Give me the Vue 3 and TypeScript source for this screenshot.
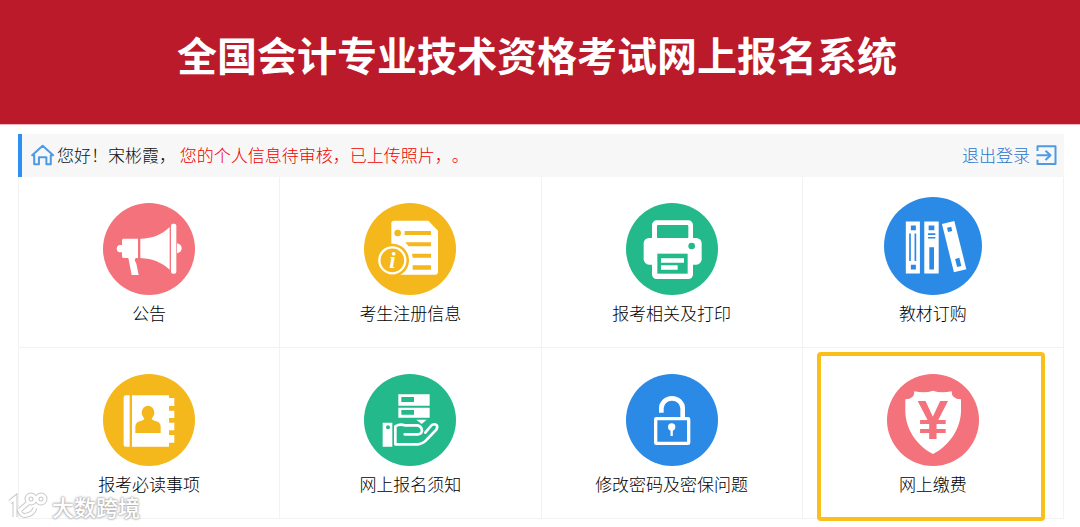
<script setup lang="ts">
type IconName = 'megaphone' | 'profile' | 'printer' | 'books' | 'notebook' | 'service' | 'lock' | 'payment'

interface Entry {
  icon: IconName
  label: string
  color: string
  viewBox: string
  cx: number
  cy: number
  r: number
  large?: boolean
  highlighted?: boolean
}

const pink = '#f3727b'
const yellow = '#f5b81c'
const green = '#24b98b'
const blue = '#2a8ae6'

const entries: Entry[] = [
  { icon: 'megaphone', label: '公告', color: pink, viewBox: '40 39 276 276', cx: 178, cy: 177, r: 138 },
  { icon: 'profile', label: '考生注册信息', color: yellow, viewBox: '46 39 276 276', cx: 184, cy: 177, r: 138 },
  { icon: 'printer', label: '报考相关及打印', color: green, viewBox: '48 39 276 276', cx: 186, cy: 177, r: 138 },
  { icon: 'books', label: '教材订购', color: blue, viewBox: '43 22 292 292', cx: 189, cy: 168, r: 146, large: true },
  { icon: 'notebook', label: '报考必读事项', color: yellow, viewBox: '40 27 276 276', cx: 178, cy: 165, r: 138 },
  { icon: 'service', label: '网上报名须知', color: green, viewBox: '46 27 276 276', cx: 184, cy: 165, r: 138 },
  { icon: 'lock', label: '修改密码及密保问题', color: blue, viewBox: '108 27 276 276', cx: 246, cy: 165, r: 138 },
  { icon: 'payment', label: '网上缴费', color: pink, viewBox: '231 88 276 276', cx: 369, cy: 226, r: 138, highlighted: true },
]
</script>

<template>
  <div class="page">
    <header class="banner">
      <h1>全国会计专业技术资格考试网上报名系统</h1>
    </header>

    <main class="content">
      <div class="status">
        <svg class="home" viewBox="95 74 70 65" aria-hidden="true">
          <path d="M98 107 129 79 160 107H153V134H140V113H118V134H104V107Z" />
        </svg>
        <p>您好！宋彬霞， <span class="notice">您的个人信息待审核，已上传照片，。</span></p>
        <a class="logout" href="#logout">
          退出登录
          <svg viewBox="410 73 62 60" aria-hidden="true">
            <path d="M414 91V77H468V130H414V117M411 104H452M438 90 453 104 438 118" />
          </svg>
        </a>
      </div>

      <nav class="grid">
        <a
          v-for="e in entries"
          :key="e.icon"
          :href="'#' + e.icon"
          class="tile"
          :class="{ highlighted: e.highlighted }"
        >
          <svg class="icon" :class="{ large: e.large }" :viewBox="e.viewBox" aria-hidden="true">
            <circle :cx="e.cx" :cy="e.cy" :r="e.r" :fill="e.color" />

            <g v-if="e.icon === 'megaphone'" fill="#fff">
              <path d="M101 146H145V204H138L135 211 140 221 147 255H126L116 204H101Q97 204 97 198V187H88Q81 184 81 176T88 165H97V152Q97 146 101 146Z" />
              <path d="M152 146C190 145 215 135 240 111V239C215 217 190 206 152 204Z" />
              <rect x="244" y="101" width="16" height="150" rx="6" />
              <path d="M262 160Q276 163 276 175T262 190Z" />
            </g>

            <g v-else-if="e.icon === 'profile'">
              <path fill="#fff" d="M136 92H239L268 122V245Q268 254 259 254H128V100Q128 92 136 92Z" />
              <g :fill="e.color">
                <circle cx="147" cy="129" r="10" />
                <path d="M168 123H247V135H168ZM170 157H247V169H180ZM190 191H247V203H192ZM192 226H247V239H192Z" />
                <circle cx="131" cy="211" r="50" />
              </g>
              <circle cx="131" cy="211" r="39" fill="none" stroke="#fff" stroke-width="7" />
              <text class="info" x="131" y="234" text-anchor="middle">i</text>
            </g>

            <g v-else-if="e.icon === 'printer'" fill="#fff">
              <rect x="126" y="91" width="123" height="80" rx="14" />
              <rect x="141" y="105" width="94" height="40" rx="3" :fill="e.color" />
              <rect x="101" y="144" width="174" height="80" rx="16" />
              <rect x="126" y="185" width="123" height="82" rx="14" />
              <rect x="142" y="191" width="91" height="60" :fill="e.color" />
              <path d="M153 205H222V218H153ZM153 226H203V239H153Z" />
              <circle cx="245" cy="168" r="10" :fill="e.color" />
            </g>

            <g v-else-if="e.icon === 'books'">
              <path fill="#fff" d="M108 95H150V250H108ZM163 95H206V250H163Z" />
              <path
                :fill="e.color"
                d="M123 107H138V121H123ZM118 131H123V213H118ZM134 131H139V213H134ZM123 224H138V238H123ZM176 107H193V121H176ZM174 130H196V135H174ZM174 141H196V146H174ZM178 172H192V238H178Z"
              />
              <g transform="rotate(-14 252 170)">
                <rect x="233" y="96" width="38" height="148" fill="#fff" />
                <rect x="245" y="110" width="13" height="13" :fill="e.color" />
                <rect x="246" y="206" width="13" height="25" :fill="e.color" />
              </g>
            </g>

            <g v-else-if="e.icon === 'notebook'">
              <path fill="#fff" d="M108 91H120V245H108Q102 245 102 239V97Q102 91 108 91ZM127 91H238V99H254V123H238V137H254V159H238V173H254V196H238V210H254V233H238V245H127Z" />
              <ellipse cx="175" cy="143" rx="19" ry="21" :fill="e.color" />
              <path :fill="e.color" d="M164 158H186Q186 166 200 169 213 173 213 186V204H137V186Q137 173 150 169 164 166 164 158Z" />
            </g>

            <g v-else-if="e.icon === 'service'" fill="#fff">
              <path d="M149 88H243V122H149ZM149 128H243V158H149ZM203 164H234L219 177ZM102 173H131V245H102Z" />
              <path :fill="e.color" d="M158 96H196V111H158ZM158 135H196V149H158Z" />
              <circle cx="118" cy="187" r="6" :fill="e.color" />
              <path
                fill="none"
                stroke="#fff"
                stroke-width="8"
                stroke-linejoin="round"
                stroke-linecap="round"
                d="M168 208H208Q220 207 220 196 219 184 206 181H168Q153 176 140 184V238H208Q226 235 236 222L263 194Q270 180 259 178 251 176 244 186L230 203"
              />
            </g>

            <g v-else-if="e.icon === 'lock'" fill="none" stroke="#fff">
              <rect x="197" y="161" width="99" height="74" rx="2" stroke-width="10" />
              <path d="M214 143V130A32 30 0 0 1 278 130V160" stroke-width="14" />
              <circle cx="245" cy="186" r="11" fill="#fff" stroke="none" />
              <path d="M245 190V213" stroke-width="7" />
            </g>

            <g v-else>
              <path fill="#fff" d="M313 140Q345 147 369 138 393 147 425 140 424 163 453 164V202C450 261 411 307 369 328 327 307 288 261 286 202V164Q314 163 313 140Z" />
              <text class="yen" x="369" y="283" text-anchor="middle" :fill="e.color">¥</text>
            </g>
          </svg>
          <span class="label">{{ e.label }}</span>
        </a>
      </nav>
    </main>

    <div class="watermark">
      <svg viewBox="0 0 40 28" aria-hidden="true">
        <g v-for="layer in ['halo', 'mark']" :key="layer" :class="layer">
          <path d="M2 10 7 6V25M20 11 12 18M11 17Q13 25 19 23 25 22 27 16" />
          <circle cx="23" cy="7" r="4" />
          <circle cx="33" cy="7" r="4" />
        </g>
      </svg>
      <span>大数跨境</span>
    </div>
  </div>
</template>

<style>
body {
  margin: 0;
  background: #fff;
}
</style>

<style scoped>
.page {
  position: relative;
  font-family: "Noto Sans CJK SC", sans-serif;
  font-size: 17px;
  font-weight: 300;
  line-height: 24px;
  color: #000;
  text-spacing-trim: space-all;
}

.banner {
  box-sizing: border-box;
  padding: 24px 6px 40px 0;
  background: #bb1a2b;
  border-bottom: 1px solid #f8b4c0;
}

h1 {
  margin: 0;
  font-size: 40px;
  line-height: 60px;
  font-weight: 700;
  color: #fff;
  text-align: center;
}

.content {
  padding: 9px 16px 7px 18px;
}

.status {
  display: flex;
  align-items: center;
  height: 43px;
  padding: 0 7px 2px 9px;
  background: #f7f7f7;
  border-left: 4px solid #2a90f5;
  box-sizing: border-box;
}

.status p {
  flex: 1;
  margin: 0 0 0 2px;
  color: #111;
}

.notice {
  color: #f00000;
}

.status svg {
  fill: none;
  stroke: #4f9be2;
  stroke-width: 6;
  stroke-linejoin: round;
}

.home {
  width: 24px;
  height: 22px;
}

.logout {
  display: flex;
  align-items: center;
  gap: 6px;
  color: #1f74d0;
  text-decoration: none;
}

.logout svg {
  width: 21px;
  height: 20px;
}

.grid {
  display: grid;
  grid-template-columns: repeat(4, 1fr);
  border-left: 1px solid #f2f2f2;
}

.tile {
  position: relative;
  box-sizing: border-box;
  display: flex;
  flex-direction: column;
  align-items: center;
  justify-content: flex-end;
  gap: 6px;
  min-height: 171px;
  padding-bottom: 22px;
  border-right: 1px solid #f2f2f2;
  border-bottom: 1px solid #f2f2f2;
  color: #000;
  text-decoration: none;
}

.icon {
  width: 92px;
  height: 92px;
}

.icon.large {
  width: 98px;
  height: 98px;
}

.info {
  font: italic 700 68px "Liberation Serif", serif;
  fill: #fff;
}

.yen {
  font: 700 166px "Liberation Sans", sans-serif;
}

.highlighted::after {
  content: "";
  position: absolute;
  inset: 4px 18px -3px 14px;
  border: 4px solid #fbbf1a;
  border-radius: 4px;
}

.watermark {
  position: absolute;
  left: 8px;
  bottom: 6px;
  display: flex;
  align-items: center;
  gap: 4px;
  color: #fff;
  font-size: 22px;
  font-weight: 500;
  line-height: 28px;
  text-shadow: 0 0 2px #aaa, 0 0 2px #aaa, 0 0 3px #bbb;
}

.watermark svg {
  width: 40px;
  height: 28px;
  fill: none;
}

.halo {
  stroke: #c8c8c8;
  stroke-width: 5;
}

.mark {
  stroke: #fff;
  stroke-width: 3;
}
</style>
